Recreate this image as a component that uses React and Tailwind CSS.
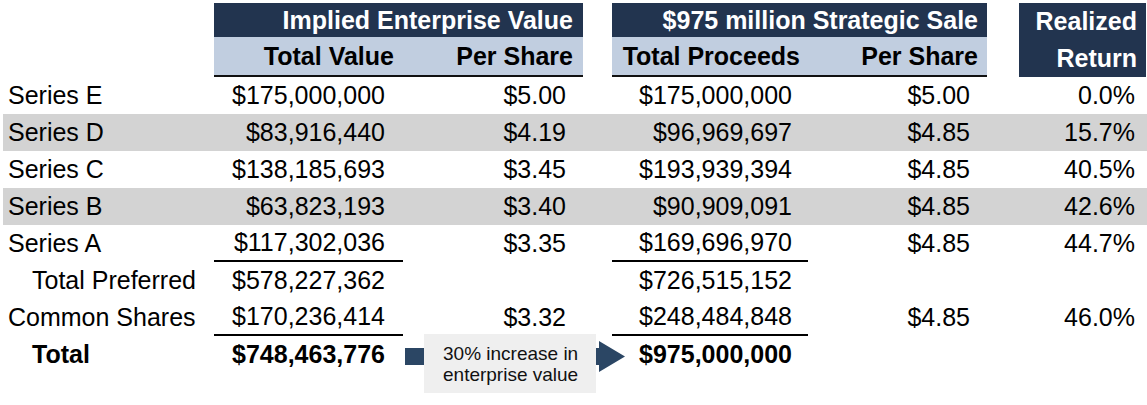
import React from "react";

const NAVY = "bg-[#22344f]";
const LIGHT = "bg-[#c1cee0]";

const rows = [
  { label: "Series E", v1: "$175,000,000", p1: "$5.00", v2: "$175,000,000", p2: "$5.00", r: "0.0%", band: false },
  { label: "Series D", v1: "$83,916,440", p1: "$4.19", v2: "$96,969,697", p2: "$4.85", r: "15.7%", band: true },
  { label: "Series C", v1: "$138,185,693", p1: "$3.45", v2: "$193,939,394", p2: "$4.85", r: "40.5%", band: false },
  { label: "Series B", v1: "$63,823,193", p1: "$3.40", v2: "$90,909,091", p2: "$4.85", r: "42.6%", band: true },
  { label: "Series A", v1: "$117,302,036", p1: "$3.35", v2: "$169,696,970", p2: "$4.85", r: "44.7%", band: false, line: true },
  { label: "Total Preferred", v1: "$578,227,362", p1: "", v2: "$726,515,152", p2: "", r: "", band: false, indent: true },
  { label: "Common Shares", v1: "$170,236,414", p1: "$3.32", v2: "$248,484,848", p2: "$4.85", r: "46.0%", band: false, line: true },
];

function Row({ r }) {
  return (
    <div className={`ml-[3px] flex h-[37px] items-center ${r.band ? "bg-[#d3d3d3]" : ""}`}>
      <div className={`w-[211px] ${r.indent ? "pl-[29px]" : "pl-[5px]"}`}>{r.label}</div>
      <div className={`flex h-full w-[189px] items-center justify-end pr-[18px] ${r.line ? "border-b-2 border-black" : ""}`}>{r.v1}</div>
      <div className="w-[180px] pr-[17px] text-right">{r.p1}</div>
      <div className="w-[29px]" />
      <div className={`flex h-full w-[196px] items-center justify-end pr-[16px] ${r.line ? "border-b-2 border-black" : ""}`}>{r.v2}</div>
      <div className="w-[179px] pr-[17px] text-right">{r.p2}</div>
      <div className="w-[32px]" />
      <div className="w-[124px] pr-[8px] text-right">{r.r}</div>
    </div>
  );
}

export default function App() {
  return (
    <div
      className="relative h-[405px] w-[1147px] overflow-hidden bg-white text-[25px] leading-none text-black"
      style={{ fontFamily: '"Liberation Sans", Arial, sans-serif' }}
    >
      {/* Header */}
      <div className="ml-[3px] flex pt-[3px]">
        <div className="w-[211px]" />
        <div className="w-[369px] border-b-2 border-[#111]">
          <div className={`${NAVY} flex h-[34px] items-center justify-end pr-[10px] font-bold text-white`}>
            Implied Enterprise Value
          </div>
          <div className={`${LIGHT} flex h-[38px] items-center font-bold`}>
            <div className="w-[189px] pr-[9px] text-right">Total Value</div>
            <div className="w-[180px] pr-[10px] text-right">Per Share</div>
          </div>
        </div>
        <div className="w-[29px]" />
        <div className="w-[375px] border-b-2 border-[#111]">
          <div className={`${NAVY} flex h-[34px] items-center justify-end pr-[9px] font-bold text-white`}>
            $975 million Strategic Sale
          </div>
          <div className={`${LIGHT} flex h-[38px] items-center font-bold`}>
            <div className="w-[196px] pr-[8px] text-right">Total Proceeds</div>
            <div className="w-[179px] pr-[9px] text-right">Per Share</div>
          </div>
        </div>
        <div className="w-[32px]" />
        <div className={`${NAVY} flex h-[74px] w-[127px] flex-col items-end justify-center gap-[12px] pr-[9px] font-bold text-white`}>
          <span>Realized</span>
          <span>Return</span>
        </div>
      </div>

      {/* Body */}
      <div className="flex flex-col">
        {rows.map((r) => (
          <Row key={r.label} r={r} />
        ))}
        <div className="relative ml-[3px] flex h-[37px] items-center font-bold">
          <div className="w-[211px] pl-[29px]">Total</div>
          <div className="w-[189px] pr-[18px] text-right">$748,463,776</div>
          <div className="w-[180px]" />
          <div className="w-[29px]" />
          <div className="w-[196px] pr-[16px] text-right">$975,000,000</div>

          {/* arrow + callout overlay */}
          <svg
            className="absolute left-[402px] top-[5px]"
            width="222"
            height="32"
            viewBox="0 0 222 32"
          >
            <path d="M0 7 H194 V0 L220 15.5 L194 31 V24 H0 Z" fill="#2b4664" />
          </svg>
          <div className="absolute left-[421px] top-[-2px] flex h-[59px] w-[172px] flex-col justify-center bg-[#efefef] pl-[19px] text-[19px] font-normal leading-[21px] text-[#111]">
            <span>30% increase in</span>
            <span>enterprise value</span>
          </div>
        </div>
      </div>
    </div>
  );
}
